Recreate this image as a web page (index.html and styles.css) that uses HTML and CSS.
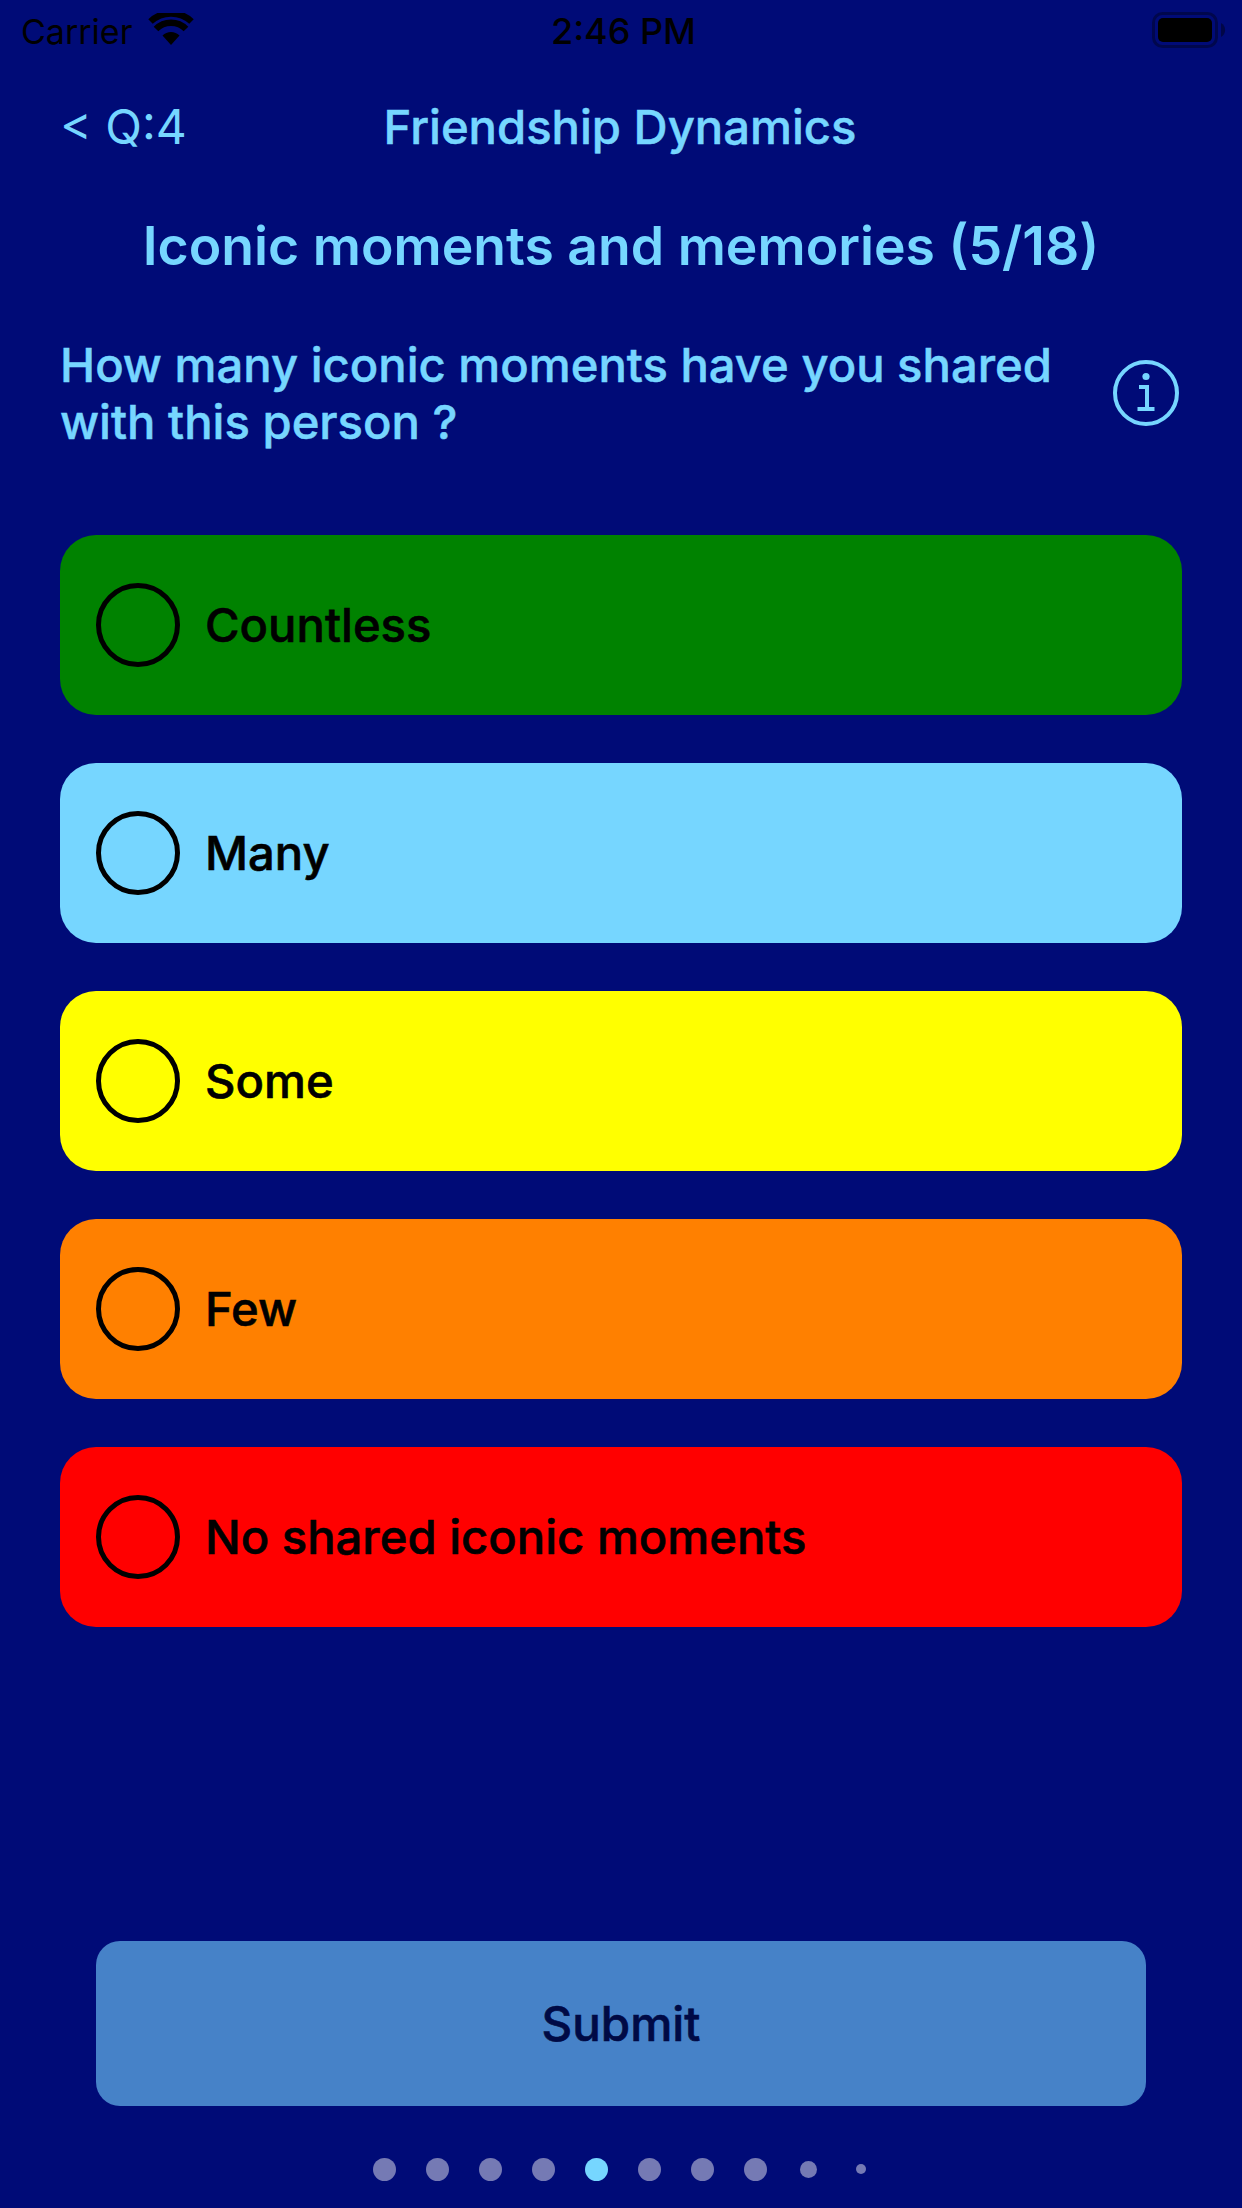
FILE: index.html
```html
<!DOCTYPE html>
<html lang="en">
<head>
  <meta charset="UTF-8" />
  <meta name="viewport" content="width=device-width, initial-scale=1.0"/>
  <title>Friendship Dynamics</title>
  <link rel="stylesheet" href="styles.css">
</head>
<body>

<div class="screen">
  <div class="status-bar">
    <div class="status-left">
      <span>Carrier</span>
      <svg class="wifi" width="46" height="32" viewBox="0 0 46 32">
        <path d="M23 32 L14.5 22.5 A12 12 0 0 1 31.5 22.5 Z" fill="#000"/>
        <path d="M8 16 A21 21 0 0 1 38 16" fill="none" stroke="#000" stroke-width="6.5"/>
        <path d="M2.5 8.5 A30 30 0 0 1 43.5 8.5" fill="none" stroke="#000" stroke-width="6.5"/>
      </svg>
    </div>
    <div class="status-time">2:46 PM</div>
    <div class="status-right">
      <svg width="74" height="36" viewBox="0 0 74 36">
        <rect x="1.5" y="1.5" width="63" height="33" rx="9" fill="none" stroke="#000" stroke-opacity="0.35" stroke-width="3"/>
        <rect x="6" y="6" width="54" height="24" rx="5" fill="#000"/>
        <path d="M69 11 A8 8 0 0 1 69 25 Z" fill="#000" fill-opacity="0.4"/>
      </svg>
    </div>
  </div>

  <div class="nav">
    <div class="nav-back">&lt; Q:4</div>
    <div class="nav-title">Friendship Dynamics</div>
  </div>

  <h1 class="section-title">Iconic moments and memories (5/18)</h1>

  <div class="question">
    <p>How many iconic moments have you shared with this person ?</p>
    <svg class="info" width="66" height="66" viewBox="0 0 66 66">
      <circle cx="33" cy="33" r="31" fill="none" stroke="#76d6ff" stroke-width="4"/>
      <circle cx="33" cy="16.5" r="3.6" fill="#76d6ff"/>
      <path d="M26 27 H34 V49 M24.5 49 H41.5" fill="none" stroke="#76d6ff" stroke-width="4"/>
    </svg>
  </div>

  <div class="options">
    <div class="option green"><span class="radio"></span><span class="option-label">Countless</span></div>
    <div class="option sky"><span class="radio"></span><span class="option-label">Many</span></div>
    <div class="option yellow"><span class="radio"></span><span class="option-label">Some</span></div>
    <div class="option orange"><span class="radio"></span><span class="option-label">Few</span></div>
    <div class="option red"><span class="radio"></span><span class="option-label">No shared iconic moments</span></div>
  </div>

  <button class="submit" type="button">Submit</button>

  <div class="dots">
    <span class="dot"></span>
    <span class="dot"></span>
    <span class="dot"></span>
    <span class="dot"></span>
    <span class="dot active"></span>
    <span class="dot"></span>
    <span class="dot"></span>
    <span class="dot"></span>
    <span class="dot small"></span>
    <span class="dot tiny"></span>
  </div>
</div>

</body>
</html>
```

FILE: styles.css
```css
* {
  box-sizing: border-box;
}
body {
  margin: 0;
  background: #000b77;
  font-family: Inter, "Noto Sans", sans-serif;
}
.screen {
  width: 1242px;
  height: 2208px;
  overflow: hidden;
  background: #000b77;
  color: #76d6ff;
}
.status-bar {
  height: 62px;
  display: grid;
  grid-template-columns: 1fr auto 1fr;
  align-items: center;
  padding: 0 16px 0 21px;
  color: #000;
  font-size: 34px;
}
.status-left {
  display: flex;
  align-items: center;
  gap: 16px;
}
.wifi {
  margin-top: -4px;
}
.status-time {
  font-size: 36px;
  font-weight: 500;
}
.status-right {
  display: flex;
  justify-content: flex-end;
  margin-top: -2px;
}
.nav {
  display: grid;
  grid-template-columns: 1fr auto 1fr;
  align-items: center;
  height: 70px;
  margin-top: 29px;
  padding: 0 62px 0 60px;
}
.nav-back {
  font-size: 48px;
}
.nav-title {
  font-size: 47.2px;
  font-weight: 500;
  -webkit-text-stroke: 0.5px #76d6ff;
}
.section-title {
  margin: 50px 0 0;
  height: 70px;
  line-height: 70px;
  text-align: center;
  font-size: 53.5px;
  font-weight: 600;
}
.question {
  display: flex;
  align-items: center;
  justify-content: space-between;
  margin-top: 55px;
  padding: 0 63px 0 60px;
}
.question p {
  margin: 0;
  width: 1030px;
  font-size: 47.2px;
  line-height: 57px;
  font-weight: 500;
  -webkit-text-stroke: 0.5px #76d6ff;
}
.options {
  display: flex;
  flex-direction: column;
  gap: 48px;
  margin: 85px 60px 0;
}
.option {
  height: 180px;
  border-radius: 36px;
  display: flex;
  align-items: center;
  gap: 25px;
  padding-left: 36px;
  color: #000;
  font-size: 47.2px;
  font-weight: 500;
}
.option-label {
  margin-top: -2px;
  -webkit-text-stroke: 0.6px #000;
}
.radio {
  width: 84px;
  height: 84px;
  border: 5px solid #000;
  border-radius: 50%;
}
.green { background: #008200; }
.sky { background: #76d6ff; }
.yellow { background: #ffff00; }
.orange { background: #ff8000; }
.red { background: #ff0000; }
.submit {
  display: block;
  width: 1050px;
  height: 165px;
  margin: 314px 0 0 96px;
  border: none;
  border-radius: 24px;
  background: #4682c8;
  color: #000a45;
  font-family: inherit;
  font-size: 47.5px;
  font-weight: 500;
  -webkit-text-stroke: 0.6px #000a45;
}
.dots {
  display: flex;
  align-items: center;
  height: 24px;
  margin-top: 51px;
  padding-left: 358px;
}
.dot {
  width: 23px;
  height: 23px;
  margin: 0 15px;
  border-radius: 50%;
  background: #757ab4;
}
.dot.active {
  background: #76d6ff;
}
.dot.small {
  width: 17px;
  height: 17px;
  margin: 0 18px;
}
.dot.tiny {
  width: 10px;
  height: 10px;
  margin: 0 21px;
}
```
